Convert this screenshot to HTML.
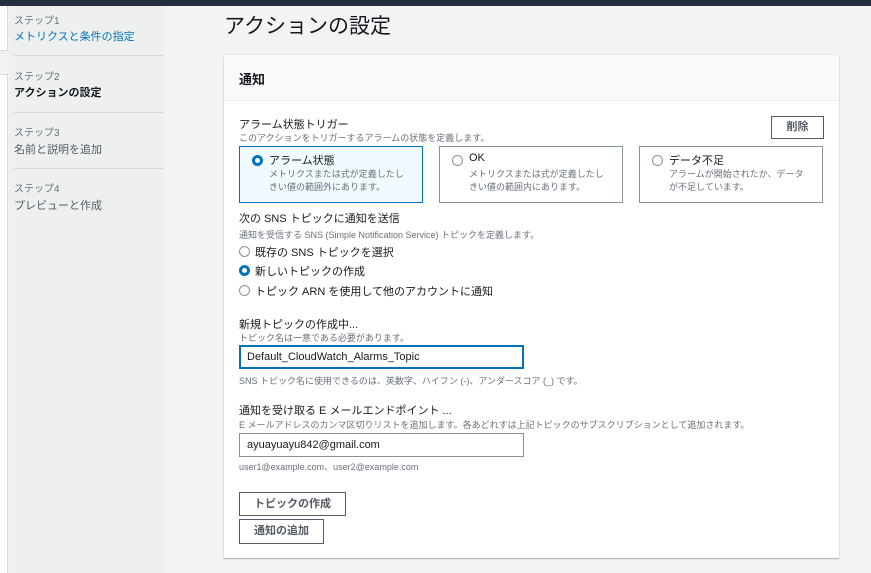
<!DOCTYPE html>
<html><head><meta charset="utf-8"><style>
*{box-sizing:border-box;margin:0;padding:0}
body{width:871px;height:573px;overflow:hidden;background:#f2f3f3;font-family:"Liberation Sans","Noto Sans CJK JP",sans-serif;color:#16191f;position:relative}
.a{position:absolute;white-space:nowrap}
.top{left:0;top:0;width:871px;height:6px;background:#232f3e}
.strip{left:0;top:6px;width:8px;height:567px;background:#fff;border-right:1px solid #d5dbdb}
.side{left:9px;top:6px;width:156px;height:567px;background:#eef0f0}
.step{font-size:10px;color:#687078}
.lk{font-size:11px}
.div{height:1px;background:#d5dbdb;left:14px;width:150px}
.card{left:224px;top:55px;width:615px;height:503px;background:#fff;box-shadow:0 1px 1px rgba(0,28,36,.3),0 0 0 1px #eaeded}
.hdr{left:224px;top:55px;width:615px;height:46px;background:#fafafa;border-bottom:1px solid #eaeded}
.lbl{font-size:11px;color:#16191f}
.ds{font-size:9px;color:#687078}
.tile{top:146px;height:57px;width:184px;border:1px solid #879596;background:#fff}
.tile.sel{border-color:#0073bb;background:#f1faff}
.rad{width:11px;height:11px;border-radius:50%;border:1px solid #879596;background:#fff}
.rad.on{border:3px solid #0073bb}
.btn{border:1px solid #545b64;background:#fff;font-size:11px;font-weight:bold;color:#545b64;text-align:center}
.inp{left:239px;width:285px;height:24px;border:1px solid #aab7b8;font-size:11px;padding:5px 7px;background:#fff}
</style></head><body>
<div class="a top"></div>
<div class="a strip"></div>
<div class="a" style="left:0;top:50px;width:8px;height:25px;background:#f2f3f3;border-top:1px solid #d5dbdb;border-bottom:1px solid #d5dbdb"></div>
<div class="a side"></div>
<div class="a step" style="left:14px;top:12px">ステップ1</div>
<div class="a lk" style="left:14px;top:28px;color:#0073bb">メトリクスと条件の指定</div>
<div class="a div" style="top:55px"></div>
<div class="a step" style="left:14px;top:68px">ステップ2</div>
<div class="a lk" style="left:14px;top:84px;font-weight:bold">アクションの設定</div>
<div class="a div" style="top:112px"></div>
<div class="a step" style="left:14px;top:124px">ステップ3</div>
<div class="a lk" style="left:14px;top:141px;color:#545b64">名前と説明を追加</div>
<div class="a div" style="top:168px"></div>
<div class="a step" style="left:14px;top:180px">ステップ4</div>
<div class="a lk" style="left:14px;top:197px;color:#545b64">プレビューと作成</div>

<div class="a" style="left:224px;top:10px;font-size:21px;color:#16191f">アクションの設定</div>
<div class="a card"></div>
<div class="a hdr"></div>
<div class="a" style="left:239px;top:69px;font-size:13px;font-weight:bold">通知</div>

<div class="a lbl" style="left:239px;top:116px">アラーム状態トリガー</div>
<div class="a ds" style="left:239px;top:131px">このアクションをトリガーするアラームの状態を定義します。</div>
<div class="a btn" style="left:771px;top:116px;width:53px;height:23px;line-height:21px">削除</div>

<div class="a tile sel" style="left:239px"></div>
<div class="a rad on" style="left:252px;top:155px"></div>
<div class="a lbl" style="left:269px;top:152px">アラーム状態</div>
<div class="a ds" style="left:269px;top:168px;line-height:13px">メトリクスまたは式が定義したし<br>きい値の範囲外にあります。</div>
<div class="a tile" style="left:439px"></div>
<div class="a rad" style="left:452px;top:155px"></div>
<div class="a lbl" style="left:469px;top:152px">OK</div>
<div class="a ds" style="left:469px;top:168px;line-height:13px">メトリクスまたは式が定義したし<br>きい値の範囲内にあります。</div>
<div class="a tile" style="left:639px"></div>
<div class="a rad" style="left:652px;top:155px"></div>
<div class="a lbl" style="left:669px;top:152px">データ不足</div>
<div class="a ds" style="left:669px;top:168px;line-height:13px">アラームが開始されたか、データ<br>が不足しています。</div>

<div class="a lbl" style="left:239px;top:210px">次の SNS トピックに通知を送信</div>
<div class="a ds" style="left:239px;top:228px">通知を受信する SNS (Simple Notification Service) トピックを定義します。</div>
<div class="a rad" style="left:239px;top:246px"></div>
<div class="a lbl" style="left:255px;top:244px">既存の SNS トピックを選択</div>
<div class="a rad on" style="left:239px;top:265px"></div>
<div class="a lbl" style="left:255px;top:263px">新しいトピックの作成</div>
<div class="a rad" style="left:239px;top:285px"></div>
<div class="a lbl" style="left:255px;top:283px">トピック ARN を使用して他のアカウントに通知</div>

<div class="a lbl" style="left:239px;top:316px">新規トピックの作成中...</div>
<div class="a ds" style="left:239px;top:331px">トピック名は一意である必要があります。</div>
<div class="a inp" style="top:345px;border:2px solid #0073bb;padding:4px 6px">Default_CloudWatch_Alarms_Topic</div>
<div class="a ds" style="left:239px;top:374px">SNS トピック名に使用できるのは、英数字、ハイフン (-)、アンダースコア (_) です。</div>

<div class="a lbl" style="left:239px;top:402px">通知を受け取る E メールエンドポイント ...</div>
<div class="a ds" style="left:239px;top:418px">E メールアドレスのカンマ区切りリストを追加します。各あどれすは上記トピックのサブスクリプションとして追加されます。</div>
<div class="a inp" style="top:433px;border-color:#879596">ayuayuayu842@gmail.com</div>
<div class="a ds" style="left:239px;top:460px">user1@example.com、user2@example.com</div>

<div class="a btn" style="left:239px;top:492px;width:107px;height:24px;line-height:22px">トピックの作成</div>
<div class="a btn" style="left:239px;top:519px;width:85px;height:25px;line-height:23px">通知の追加</div>
</body></html>
